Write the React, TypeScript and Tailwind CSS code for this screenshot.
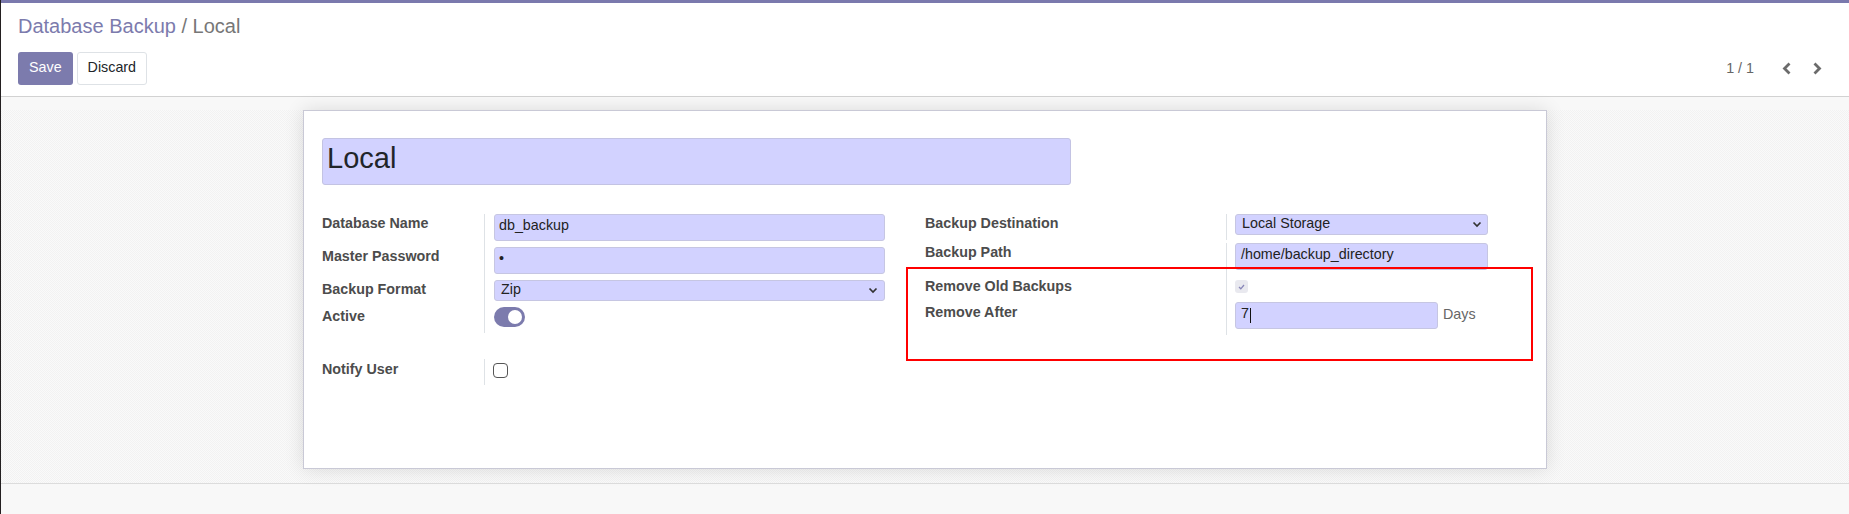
import React from "react";

function Chevron({ dir }: { dir: "left" | "right" }) {
  return (
    <svg width="10" height="13" viewBox="0 0 10 13" className="block">
      <polyline
        points={dir === "left" ? "7.5,1.5 2.5,6.5 7.5,11.5" : "2.5,1.5 7.5,6.5 2.5,11.5"}
        fill="none"
        stroke="#6b6b6b"
        strokeWidth="2.8"
      />
    </svg>
  );
}

function SelectChevron() {
  return (
    <svg width="10" height="7" viewBox="0 0 10 7" className="block">
      <polyline points="1.5,1.5 5,5 8.5,1.5" fill="none" stroke="#333" strokeWidth="1.7" />
    </svg>
  );
}

export default function App() {
  return (
    <div className="w-[1849px] h-[514px] overflow-hidden bg-[#f8f8f8] border-l border-[#231f20] font-['Liberation_Sans',Arial,sans-serif] flex flex-col">
      <div className="h-[3px] bg-[#7a79ad] shrink-0" />
      <header className="bg-white border-b border-[#d2d2d2] pl-[17px] pr-[27px] pt-[11px] pb-[11px] shrink-0">
        <div className="text-[20px] leading-[24px]">
          <span className="text-[#7c7bad]">Database Backup</span>
          <span className="text-[#777777]"> / Local</span>
        </div>
        <div className="mt-[14px] flex items-center justify-between">
          <div className="flex gap-[4px]">
            <button className="h-[33px] px-[11px] pb-[2px] bg-[#7c7bad] text-white rounded-[3px] text-[14.3px]">
              Save
            </button>
            <button className="h-[33px] px-[10px] pb-[2px] bg-white border border-[#dee2e6] rounded-[3px] text-[14.3px] text-[#212529]">
              Discard
            </button>
          </div>
          <div className="flex items-center">
            <span className="text-[14.3px] text-[#666666]">1 / 1</span>
            <span className="ml-[28px]">
              <Chevron dir="left" />
            </span>
            <span className="ml-[20px]">
              <Chevron dir="right" />
            </span>
          </div>
        </div>
      </header>

      <div className="h-[387px] shrink-0 bg-[#f8f8f8] pt-[13px] border-b border-[#dcdcdc]">
        <div className="h-[373px] pb-[14px] bg-[image:repeating-conic-gradient(#f2f2f2_0%_25%,#fafafa_0%_50%)] bg-[length:2px_2px]">
          <div className="relative mx-auto w-[1244px] h-[359px] bg-white border border-[#c9c9d6] shadow-[0_0_18px_rgba(0,0,0,0.12)] pl-[18px] pt-[27px] text-[14.3px]">
            <div className="w-[749px] h-[47px] bg-[#d2d2ff] border border-[#c3c3e3] rounded-[3px] pl-[4px] text-[29px] leading-[38px] text-[#212529]">
              Local
            </div>

            <div className="mt-[29px] flex">
              {/* Left group */}
              <div className="w-[603px]">
                <div className="flex h-[33px]">
                  <div className="w-[163px] border-r border-[#dee2e6] pt-[1px] leading-[16px] font-bold text-[#4c4c4c]">
                    Database Name
                  </div>
                  <div className="pl-[9px]">
                    <div className="w-[391px] h-[27px] bg-[#d2d2ff] border border-[#c6c6e2] rounded-[3px] px-[4px] leading-[21px] text-[#222222]">
                      db_backup
                    </div>
                  </div>
                </div>
                <div className="flex h-[33px]">
                  <div className="w-[163px] border-r border-[#dee2e6] pt-[1px] leading-[16px] font-bold text-[#4c4c4c]">
                    Master Password
                  </div>
                  <div className="pl-[9px]">
                    <div className="w-[391px] h-[27px] bg-[#d2d2ff] border border-[#c6c6e2] rounded-[3px] px-[4px] leading-[21px] text-[#222222]">
                      •
                    </div>
                  </div>
                </div>
                <div className="flex h-[27px]">
                  <div className="w-[163px] border-r border-[#dee2e6] pt-[1px] leading-[16px] font-bold text-[#4c4c4c]">
                    Backup Format
                  </div>
                  <div className="pl-[9px]">
                    <div className="w-[391px] h-[21px] bg-[#d2d2ff] border border-[#c6c6e2] rounded-[3px] pl-[6px] pr-[6px] leading-[17px] text-[#222222] flex items-start justify-between">
                      <span>Zip</span>
                      <span className="mt-[6px]">
                        <SelectChevron />
                      </span>
                    </div>
                  </div>
                </div>
                <div className="flex h-[26px]">
                  <div className="w-[163px] border-r border-[#dee2e6] pt-[1px] leading-[16px] font-bold text-[#4c4c4c]">
                    Active
                  </div>
                  <div className="pl-[9px]">
                    <div className="w-[31px] h-[20px] rounded-full bg-[#7c7bad] flex items-center justify-end pr-[3px]">
                      <div className="w-[14px] h-[14px] rounded-full bg-white" />
                    </div>
                  </div>
                </div>

                <div className="flex h-[26px] mt-[26px]">
                  <div className="w-[163px] border-r border-[#dee2e6] pt-[2px] leading-[16px] font-bold text-[#4c4c4c]">
                    Notify User
                  </div>
                  <div className="pl-[8px] pt-[4px]">
                    <div className="w-[15px] h-[15px] rounded-[4px] border-[1.5px] border-[#555555] bg-white" />
                  </div>
                </div>
              </div>

              {/* Right group */}
              <div>
                <div className="flex h-[26px] mb-[3px]">
                  <div className="w-[302px] border-r border-[#dee2e6] pt-[1px] leading-[16px] font-bold text-[#4c4c4c]">
                    Backup Destination
                  </div>
                  <div className="pl-[8px]">
                    <div className="w-[253px] h-[21px] bg-[#d2d2ff] border border-[#c6c6e2] rounded-[3px] pl-[6px] pr-[5px] leading-[17px] text-[#222222] flex items-start justify-between">
                      <span>Local Storage</span>
                      <span className="mt-[6px]">
                        <SelectChevron />
                      </span>
                    </div>
                  </div>
                </div>
                <div className="flex h-[34px]">
                  <div className="w-[302px] border-r border-[#dee2e6] pt-[1px] leading-[16px] font-bold text-[#4c4c4c]">
                    Backup Path
                  </div>
                  <div className="pl-[8px]">
                    <div className="w-[253px] h-[27px] bg-[#d2d2ff] border border-[#c6c6e2] rounded-[3px] px-[5px] leading-[21px] text-[#222222]">
                      /home/backup_directory
                    </div>
                  </div>
                </div>
                <div className="flex h-[25px]">
                  <div className="w-[302px] border-r border-[#dee2e6] pt-[1px] leading-[16px] font-bold text-[#4c4c4c]">
                    Remove Old Backups
                  </div>
                  <div className="pl-[8px] pt-[3px]">
                    <div className="w-[13px] h-[13px] rounded-[3px] bg-[#e9e9ef] flex items-center justify-center">
                      <svg width="7" height="6" viewBox="0 0 7 6">
                        <polyline points="1,3 2.8,4.8 6,1" fill="none" stroke="#8886b8" strokeWidth="1.3" />
                      </svg>
                    </div>
                  </div>
                </div>
                <div className="flex h-[33px]">
                  <div className="w-[302px] border-r border-[#dee2e6] pt-[2px] leading-[16px] font-bold text-[#4c4c4c]">
                    Remove After
                  </div>
                  <div className="pl-[8px] flex items-start">
                    <div className="w-[203px] h-[27px] bg-[#d2d2ff] border border-[#c6c6e2] rounded-[3px] px-[5px] leading-[21px] text-[#222222] flex items-start">
                      <span>7</span>
                      <span className="w-px h-[15px] bg-[#111111] mt-[5px] ml-[1px]" />
                    </div>
                    <span className="ml-[5px] leading-[25px] text-[#666666]">Days</span>
                  </div>
                </div>
              </div>
            </div>

            <div className="pointer-events-none absolute left-[602px] top-[156px] w-[627px] h-[94px] border-2 border-[#ff0000]" />
          </div>
        </div>
      </div>
    </div>
  );
}
